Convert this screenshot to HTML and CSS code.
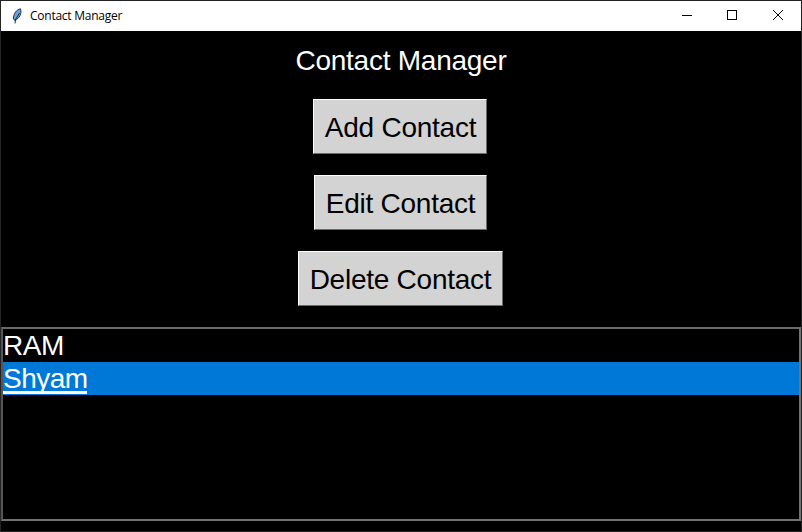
FILE: index.html
```html
<!DOCTYPE html>
<html lang="en">
<head>
<meta charset="utf-8">
<title>Contact Manager</title>
<link rel="stylesheet" href="styles.css">
</head>
<body>
<div class="window">
  <header class="titlebar">
    <svg class="feather" width="12" height="16" viewBox="0 0 12 16">
      <path d="M9.500 .8C5.500 1.500 2.500 5.500 2.300 11L4 12.500C8.500 10 11 6 9.500 .8Z" fill="#6ba3e2" stroke="#18222e" stroke-width=".9"/>
      <path d="M8.500 5L4.500 11.500L4 15.500" stroke="#10161e" fill="none" stroke-width=".9"/>
    </svg>
    <span class="caption">Contact Manager</span>
    <svg class="controls" width="138" height="29" viewBox="0 0 138 29" fill="none" stroke="#000">
      <path d="M19 14.500h10M64.500 9.500h9v9h-9z" shape-rendering="crispEdges"/>
      <path d="M110 9l10 10M120 9L110 19"/>
    </svg>
  </header>
  <main class="content">
    <h1 class="heading"><span class="text">Contact Manager</span></h1>
    <button class="button add"><span class="text">Add Contact</span></button>
    <button class="button edit"><span class="text">Edit Contact</span></button>
    <button class="button delete"><span class="text">Delete Contact</span></button>
    <ul class="list">
      <li class="row"><span class="text">RAM</span></li>
      <li class="row selected"><span class="text">Shyam</span></li>
    </ul>
  </main>
</div>
</body>
</html>
```
FILE: styles.css
```css
* { box-sizing: border-box; }
body { margin: 0; background: #000; }
.window {
  width: 802px;
  height: 532px;
  border: 1px solid #242424;
  background: #000;
  overflow: hidden;
}
.titlebar {
  display: flex;
  align-items: center;
  height: 30px;
  padding-left: 10px;
  background: #fff;
}
.feather { flex: none; margin-top: -1px; }
.caption {
  margin-left: 7px;
  font: 12px/16px "Open Sans", sans-serif;
  letter-spacing: -0.25px;
  color: #000;
}
.controls { margin: -1px 0 0 auto; }
.content {
  display: flex;
  flex-direction: column;
  align-items: center;
  font: 28px/33px "Liberation Sans", Arial, sans-serif;
}
.heading {
  margin: 13px 0 22px;
  font: inherit;
  letter-spacing: -0.25px;
  color: #fff;
}
.button {
  display: flex;
  align-items: center;
  justify-content: center;
  height: 55px;
  margin: 0 2px 21px 0;
  padding: 2px 0 0 1px;
  border: 1px solid;
  border-color: #fff #696969 #696969 #fff;
  border-radius: 0;
  background: #d3d3d3;
  font: inherit;
  letter-spacing: -0.25px;
  color: #000;
}
.add { width: 174px; }
.edit { width: 173px; }
.delete { width: 205px; }
.list {
  width: 800px;
  height: 194px;
  margin: 0;
  padding: 0;
  border: 2px solid;
  border-color: #696969 #737373 #737373 #555;
  list-style: none;
  color: #fff;
}
.row { height: 33px; letter-spacing: -0.5px; }
.selected { background: #0078d7; }
.selected .text {
  display: block;
  width: 84px;
  height: 32px;
  border-bottom: 3px solid #fff;
}
```
